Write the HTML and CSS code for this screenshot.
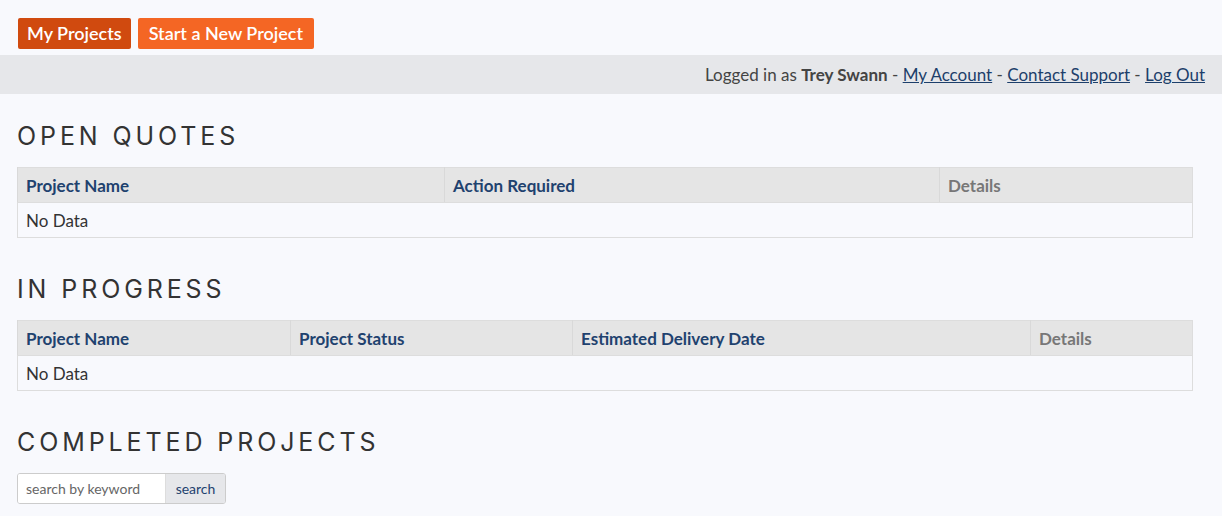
FILE: index.html
```html
<!DOCTYPE html>
<html>
<head>
<meta charset="utf-8">
<link rel="stylesheet" href="styles.css">
</head>
<body>
<div class="topnav">
  <a class="btn btn-dark" href="#">My Projects</a>
  <a class="btn btn-light" href="#">Start a New Project</a>
</div>
<div class="userbar">
  Logged in as <b>Trey Swann</b> - <a href="#">My Account</a> - <a href="#">Contact Support</a> - <a href="#">Log Out</a>
</div>
<main class="content">
  <h2 class="section-title">OPEN QUOTES</h2>
  <table class="grid">
    <colgroup><col class="w427"><col class="w495"><col></colgroup>
    <thead><tr><th>Project Name</th><th>Action Required</th><th class="muted">Details</th></tr></thead>
    <tbody><tr><td colspan="3">No Data</td></tr></tbody>
  </table>

  <h2 class="section-title">IN PROGRESS</h2>
  <table class="grid">
    <colgroup><col class="w273"><col class="w282"><col class="w458"><col></colgroup>
    <thead><tr><th>Project Name</th><th>Project Status</th><th>Estimated Delivery Date</th><th class="muted">Details</th></tr></thead>
    <tbody><tr><td colspan="4">No Data</td></tr></tbody>
  </table>

  <h2 class="section-title">COMPLETED PROJECTS</h2>
  <form class="search">
    <input type="text" placeholder="search by keyword">
    <button type="button">search</button>
  </form>
</main>
</body>
</html>
```
FILE: styles.css
```css
html, body {
  margin: 0;
  padding: 0;
  background: #f8f9fd;
  font-family: Lato, "Open Sans", sans-serif;
  color: #333;
  font-size: 17px;
}
.topnav {
  display: flex;
  gap: 7px;
  padding: 18px 18px 6px;
}
.btn {
  display: inline-block;
  height: 31px;
  line-height: 31px;
  padding: 0 10px;
  border-radius: 2px;
  color: #fff;
  text-decoration: none;
  font-size: 18px;
  font-weight: 600;
}
.btn-dark { background: #d04a0f; padding: 0 9px; }
.btn-light { background: #f46624; padding: 0 11px; }
.userbar {
  background: #e6e7ea;
  height: 39px;
  line-height: 40px;
  text-align: right;
  padding-right: 17px;
  color: #444;
  font-size: 17px;
}
.userbar b { color: #444; font-weight: 700; }
.userbar a { color: #1d3f6b; text-decoration: underline; }
.content {
  width: 1176px;
  margin-left: 17px;
  padding-top: 25px;
}
.section-title {
  margin: 0 0 14px;
  font-family: Inter, "Open Sans", sans-serif;
  font-weight: 400;
  font-size: 25px;
  letter-spacing: 3.9px;
  line-height: 34px;
  color: #333;
}
.grid {
  width: 100%;
  border-collapse: collapse;
  table-layout: fixed;
  border: 1px solid #ddd;
  margin-bottom: 34px;
}
.w427 { width: 427px; }
.w495 { width: 495px; }
.w273 { width: 273px; }
.w282 { width: 282px; }
.w458 { width: 458px; }
.grid th {
  background: #e5e5e5;
  color: #1f426f;
  text-align: left;
  font-weight: 700;
  height: 34px;
  padding: 0 8px;
  border-left: 1px solid #d9d9d9;
  border-bottom: 1px solid #ddd;
}
.grid th.muted { color: #777; }
.grid td {
  height: 34px;
  padding: 0 8px;
  background: #f8f9fd;
}
.search {
  display: flex;
  width: 209px;
  height: 31px;
  border: 1px solid #ccc;
  border-radius: 3px;
  overflow: hidden;
  margin: 1px 0 0;
  box-sizing: border-box;
}
.search input {
  width: 148px;
  min-width: 0;
  flex: 0 0 148px;
  border: 0;
  border-right: 1px solid #ddd;
  padding: 0 8px;
  font-family: Lato, sans-serif;
  font-size: 14px;
  background: #fff;
  color: #333;
  box-sizing: border-box;
}
.search input::placeholder { color: #666; }
.search button {
  flex: 1;
  min-width: 0;
  border: 0;
  background: #e6e7ea;
  color: #1f426f;
  font-family: Lato, sans-serif;
  font-size: 14px;
  padding: 0;
}
```
